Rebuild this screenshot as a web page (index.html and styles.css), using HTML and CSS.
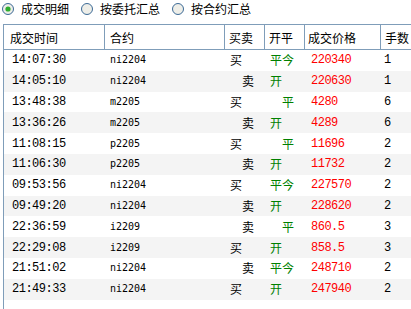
FILE: index.html
```html
<!DOCTYPE html>
<html lang="zh-CN">
<head>
    <meta charset="UTF-8">
    <meta name="viewport" content="width=device-width, initial-scale=1.0">
    <title>成交明细</title>
    <link rel="stylesheet" href="styles.css">
</head>
<body>
    <div class="options">
        <label class="opt">
            <svg width="12" height="12" viewBox="0 0 12 12"><circle cx="6" cy="6" r="5.5" fill="#eeeee8" stroke="#3c6a96"/><circle cx="6" cy="6" r="2.6" fill="#2fae2f"/></svg>
            成交明细
        </label>
        <label class="opt">
            <svg width="12" height="12" viewBox="0 0 12 12"><circle cx="6" cy="6" r="5.5" fill="#eeeee8" stroke="#3c6a96"/></svg>
            按委托汇总
        </label>
        <label class="opt">
            <svg width="12" height="12" viewBox="0 0 12 12"><circle cx="6" cy="6" r="5.5" fill="#eeeee8" stroke="#3c6a96"/></svg>
            按合约汇总
        </label>
    </div>

    <div class="grid-wrap">
        <table class="deals">
            <thead>
                <tr>
                    <th class="c-time">成交时间</th>
                    <th class="c-code">合约</th>
                    <th class="c-side">买卖</th>
                    <th class="c-oc">开平</th>
                    <th class="c-price">成交价格</th>
                    <th class="c-qty">手数</th>
                </tr>
            </thead>
            <tbody>
                <tr><td class="time">14:07:30</td><td class="code">ni2204</td><td class="side">买</td><td class="oc">平今</td><td class="price">220340</td><td class="qty">1</td></tr>
                <tr><td class="time">14:05:10</td><td class="code">ni2204</td><td class="side shift">卖</td><td class="oc">开</td><td class="price">220630</td><td class="qty">1</td></tr>
                <tr><td class="time">13:48:38</td><td class="code">m2205</td><td class="side">买</td><td class="oc shift">平</td><td class="price">4280</td><td class="qty">6</td></tr>
                <tr><td class="time">13:36:26</td><td class="code">m2205</td><td class="side shift">卖</td><td class="oc">开</td><td class="price">4289</td><td class="qty">6</td></tr>
                <tr><td class="time">11:08:15</td><td class="code">p2205</td><td class="side">买</td><td class="oc shift">平</td><td class="price">11696</td><td class="qty">2</td></tr>
                <tr><td class="time">11:06:30</td><td class="code">p2205</td><td class="side shift">卖</td><td class="oc">开</td><td class="price">11732</td><td class="qty">2</td></tr>
                <tr><td class="time">09:53:56</td><td class="code">ni2204</td><td class="side">买</td><td class="oc">平今</td><td class="price">227570</td><td class="qty">2</td></tr>
                <tr><td class="time">09:49:20</td><td class="code">ni2204</td><td class="side shift">卖</td><td class="oc">开</td><td class="price">228620</td><td class="qty">2</td></tr>
                <tr><td class="time">22:36:59</td><td class="code">i2209</td><td class="side shift">卖</td><td class="oc shift">平</td><td class="price">860.5</td><td class="qty">3</td></tr>
                <tr><td class="time">22:29:08</td><td class="code">i2209</td><td class="side">买</td><td class="oc">开</td><td class="price">858.5</td><td class="qty">3</td></tr>
                <tr><td class="time">21:51:02</td><td class="code">ni2204</td><td class="side shift">卖</td><td class="oc">平今</td><td class="price">248710</td><td class="qty">2</td></tr>
                <tr><td class="time">21:49:33</td><td class="code">ni2204</td><td class="side">买</td><td class="oc">开</td><td class="price">247940</td><td class="qty">2</td></tr>
            </tbody>
        </table>
    </div>
</body>
</html>
```

FILE: styles.css
```css
body {
    margin: 0;
    overflow: hidden;
    background: white;
    color: #000;
    font-family: "Noto Sans CJK SC", "Liberation Sans", sans-serif;
    font-size: 12px;
}
.options {
    display: flex;
    align-items: center;
    height: 24px;
    padding-left: 2px;
    box-sizing: border-box;
    padding-bottom: 6px;
}
.opt {
    display: flex;
    align-items: center;
    gap: 7px;
    margin-right: 12px;
    line-height: 14px;
}
.opt svg {
    display: block;
}
.grid-wrap {
    margin-left: 3px;
    height: 285px;
    border-left: 1px solid #7f9db9;
    border-top: 1px solid #7f9db9;
    overflow: hidden;
}
.deals {
    border-collapse: separate;
    border-spacing: 0;
    table-layout: fixed;
    width: 437px;
}
.deals th {
    box-sizing: border-box;
    height: 25px;
    padding: 0 0 0 5px;
    text-align: left;
    font-weight: normal;
    border-bottom: 1px solid #7f9db9;
    border-right: 1px solid #7f9db9;
    white-space: nowrap;
}
.deals th.c-time { width: 101px; padding-left: 6px; }
.deals th.c-code { width: 120px; }
.deals th.c-side { width: 40px; padding-left: 4px; }
.deals th.c-oc { width: 40px; padding-left: 4px; }
.deals th.c-price { width: 76px; padding-left: 3px; }
.deals th.c-qty { border-right: none; padding-left: 4px; }
.deals td {
    height: 20.8px;
    padding: 0 0 0 5px;
    white-space: nowrap;
    line-height: 14px;
}
.deals tbody tr:nth-child(even) td {
    background: #f4f4f4;
}
.time, .price, .qty {
    font-family: "Liberation Mono", "DejaVu Sans Mono", monospace;
    font-size: 12px;
    letter-spacing: -0.5px;
}
.deals td.time { padding-left: 8px; }
.deals td.code {
    font-family: "DejaVu Sans Mono", monospace;
    font-size: 10px;
    padding-left: 5px;
}
.deals td.side { padding-left: 5px; }
.deals td.oc { padding-left: 5px; color: #008000; }
.deals td.shift { padding-left: 17px; }
.deals td.price { padding-left: 6px; color: #ff0000; }
.deals td.qty { padding-left: 3px; }
```
